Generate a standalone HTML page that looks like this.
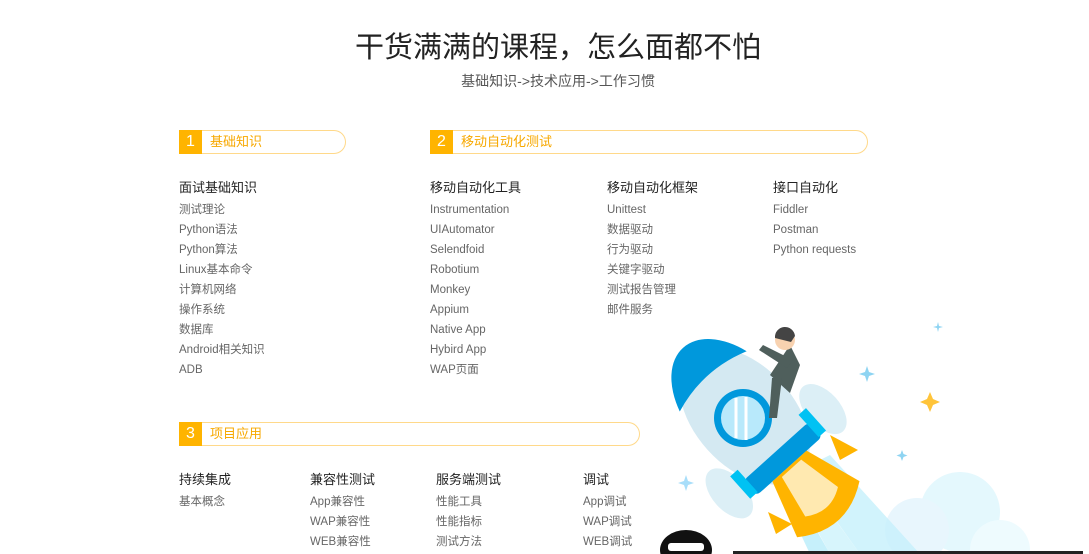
<!DOCTYPE html>
<html><head><meta charset="utf-8"><style>
*{margin:0;padding:0;box-sizing:border-box}
body{width:1089px;height:554px;overflow:hidden;background:#fff;position:relative;font-family:"Liberation Sans","Noto Sans CJK SC",sans-serif}
.a{position:absolute;white-space:nowrap}
.t{left:0;width:1116px;text-align:center;top:24px;font-size:29px;color:#222}
.st{left:0;width:1116px;text-align:center;top:71px;font-size:14px;color:#555}
.sec{position:absolute;height:24px;border:1px solid #ffd98a;border-left:none;border-radius:0 12px 12px 0}
.sec .n{position:absolute;left:0;top:-1px;width:23px;height:24px;background:#ffb400;color:#fff;font-size:16px;text-align:center;line-height:24px}
.sec .l{position:absolute;left:31px;top:0;line-height:22px;font-size:13px;color:#f7a800}
.h{font-size:13px;color:#222}
.i{font-size:11.5px;color:#666;line-height:20px}
</style></head><body>
<div class="a t">干货满满的课程，怎么面都不怕</div>
<div class="a st">基础知识-&gt;技术应用-&gt;工作习惯</div>

<div class="sec" style="left:179px;top:130px;width:167px"><div class="n">1</div><div class="l">基础知识</div></div>
<div class="sec" style="left:430px;top:130px;width:438px"><div class="n">2</div><div class="l">移动自动化测试</div></div>
<div class="sec" style="left:179px;top:422px;width:461px"><div class="n">3</div><div class="l">项目应用</div></div>

<div class="a h" style="left:179px;top:177px">面试基础知识</div>
<div class="a i" style="left:179px;top:200px">测试理论<br>Python语法<br>Python算法<br>Linux基本命令<br>计算机网络<br>操作系统<br>数据库<br>Android相关知识<br>ADB</div>
<div class="a h" style="left:430px;top:177px">移动自动化工具</div>
<div class="a i" style="left:430px;top:200px">Instrumentation<br>UIAutomator<br>Selendfoid<br>Robotium<br>Monkey<br>Appium<br>Native App<br>Hybird App<br>WAP页面</div>
<div class="a h" style="left:607px;top:177px">移动自动化框架</div>
<div class="a i" style="left:607px;top:200px">Unittest<br>数据驱动<br>行为驱动<br>关键字驱动<br>测试报告管理<br>邮件服务</div>
<div class="a h" style="left:773px;top:177px">接口自动化</div>
<div class="a i" style="left:773px;top:200px">Fiddler<br>Postman<br>Python requests</div>

<div class="a h" style="left:179px;top:469px">持续集成</div>
<div class="a i" style="left:179px;top:492px">基本概念</div>
<div class="a h" style="left:310px;top:469px">兼容性测试</div>
<div class="a i" style="left:310px;top:492px">App兼容性<br>WAP兼容性<br>WEB兼容性</div>
<div class="a h" style="left:436px;top:469px">服务端测试</div>
<div class="a i" style="left:436px;top:492px">性能工具<br>性能指标<br>测试方法</div>
<div class="a h" style="left:583px;top:469px">调试</div>
<div class="a i" style="left:583px;top:492px">App调试<br>WAP调试<br>WEB调试</div>

<svg class="a" style="left:0;top:0" width="1089" height="554">
<circle cx="960" cy="512" r="40" fill="#e4f8fd"/>
<circle cx="917" cy="530" r="32" fill="#e8f6fd"/>
<circle cx="1000" cy="550" r="30" fill="#eefbfe"/>
<polygon points="800,470 830,455 920,554 860,554" fill="#c6f0fb" opacity=".8"/>
<polygon points="790,480 805,478 860,554 830,554" fill="#d7f5fc"/>
<polygon points="780,490 795,492 830,554 810,554" fill="#c6f0fb"/>
<g transform="rotate(-42 748 420)">
<ellipse cx="748" cy="415" rx="50" ry="80" fill="#d4e9f2"/>
<path d="M703,368 A50,80 0 0 1 793,368 Q748,352 703,368Z" fill="#0098dc"/>
<rect x="703" y="462" width="90" height="20" rx="6" fill="#0098dc"/>
<path d="M725,482 L771,482 L790,540 Q748,570 706,540Z" fill="#ffb400"/>
<path d="M735,485 L761,485 L770,530 Q748,545 726,530Z" fill="#ffe9b0"/>
<ellipse cx="685" cy="462" rx="17" ry="30" fill="#dceff6"/>
<ellipse cx="811" cy="462" rx="17" ry="30" fill="#dceff6"/>
<rect x="697" y="450" width="10" height="30" fill="#00c2f3"/>
<rect x="789" y="450" width="10" height="30" fill="#00c2f3"/>
</g>
<circle cx="743" cy="418" r="29" fill="#0098dc"/>
<circle cx="743" cy="418" r="22" fill="#b8e9fb"/>
<path d="M736,398 L736,438 M746,397 L746,440" stroke="#fff" stroke-width="3"/>
<path d="M830,435 l10,25 l18,-10 z" fill="#ffb400"/>
<path d="M768,512 l8,22 l16,-10 z" fill="#ffb400"/>
<path d="M770,375 l20,-30 l10,20 l-10,28 z" fill="#4f5f5c"/>
<path d="M763,345 l30,15 l-6,8 l-28,-18z" fill="#4f5f5c"/>
<circle cx="785" cy="340" r="10" fill="#f8d2b0"/>
<path d="M775,338 a10,10 0 0 1 20,-2 l-4,6 z" fill="#444"/>
<path d="M772,378 l10,0 l-5,40 l-8,0z" fill="#4f5f5c"/>
<path d="M930,392 l3,7 l7,3 l-7,3 l-3,7 l-3,-7 l-7,-3 l7,-3z" fill="#ffc43a"/>
<path d="M867,366 l2,6 l6,2 l-6,2 l-2,6 l-2,-6 l-6,-2 l6,-2z" fill="#8ed4f2"/>
<path d="M938,322 l1,4 l4,1 l-4,1 l-1,4 l-1,-4 l-4,-1 l4,-1z" fill="#8ed4f2"/>
<path d="M902,450 l1.5,4 l4,1.5 l-4,1.5 l-1.5,4 l-1.5,-4 l-4,-1.5 l4,-1.5z" fill="#8ed4f2"/>
<path d="M686,475 l2,6 l6,2 l-6,2 l-2,6 l-2,-6 l-6,-2 l6,-2z" fill="#a8defa"/>
<ellipse cx="686" cy="550" rx="26" ry="20" fill="#111"/>
<rect x="668" y="543" width="36" height="8" rx="3" fill="#fff"/>
<rect x="733" y="551" width="350" height="3" fill="#222"/>
</svg>
</body></html>
